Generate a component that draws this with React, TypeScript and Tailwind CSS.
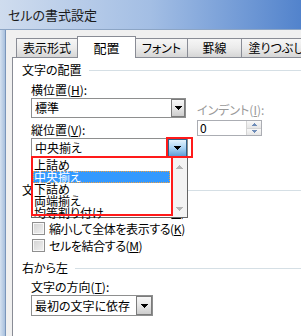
import React from "react";

const Tri = ({ c = "#000", up = false, small = false }: { c?: string; up?: boolean; small?: boolean }) =>
  small ? (
    <svg width="5" height="3" viewBox="0 0 5 3" shapeRendering="crispEdges" className={up ? "rotate-180" : ""}>
      <rect x="0" y="0" width="5" height="1" fill={c} />
      <rect x="1" y="1" width="3" height="1" fill={c} />
      <rect x="2" y="2" width="1" height="1" fill={c} />
    </svg>
  ) : (
    <svg width="7" height="4" viewBox="0 0 7 4" shapeRendering="crispEdges" className={up ? "rotate-180" : ""}>
      <rect x="0" y="0" width="7" height="1" fill={c} />
      <rect x="1" y="1" width="5" height="1" fill={c} />
      <rect x="2" y="2" width="3" height="1" fill={c} />
      <rect x="3" y="3" width="1" height="1" fill={c} />
    </svg>
  );

const Tab = ({ w, children }: { w: string; children: React.ReactNode }) => (
  <div
    className={`-ml-px flex h-[19px] items-center justify-center border border-b-0 border-[#898c95] bg-gradient-to-b from-[#f6f6f6] via-[#ebebeb] to-[#d6d6d6] ${w}`}
  >
    {children}
  </div>
);

const Heading = ({ text, className }: { text: string; className: string }) => (
  <div className={`flex h-[14px] items-center ${className}`}>
    <span className="leading-[14px]">{text}</span>
    <div className="ml-[7px] h-px flex-1 bg-[#d5dfe5]" />
  </div>
);

const Label = ({ children, className = "" }: { children: React.ReactNode; className?: string }) => (
  <div className={`h-[14px] leading-[14px] ${className}`}>{children}</div>
);

const Select = ({ text, w, h, btn }: { text: string; w: string; h: string; btn: string }) => (
  <div className={`flex items-stretch border border-[#8e8f8f] bg-white ${w} ${h}`}>
    <div className="flex flex-1 items-center pl-[3px]">{text}</div>
    <div
      className={`flex items-center justify-center border border-[#7b7b7b] bg-gradient-to-b from-[#f7f7f7] via-[#e6e6e6] to-[#cdcdcd] ${btn}`}
    >
      <Tri />
    </div>
  </div>
);

const Check = ({ children, tight }: { children: React.ReactNode; tight?: boolean }) => (
  <div className="flex h-[13px] items-center">
    <div className="h-[13px] w-[13px] shrink-0 border border-[#8f8f8f] bg-gradient-to-br from-[#d2d2d2] to-[#f2f2f2] shadow-[inset_0_0_0_1px_#f8f8f8]" />
    <span className={tight ? "ml-[4px] whitespace-nowrap leading-[13px] tracking-[-1.3px]" : "ml-[4px] whitespace-nowrap leading-[13px] tracking-[-0.4px]"}>
      {children}
    </span>
  </div>
);

const items = ["上詰め", "中央揃え", "下詰め", "両端揃え", "均等割り付け"];

export default function App() {
  return (
    <div className="flex h-[336px] w-[301px] flex-col overflow-hidden bg-[#f0f0f0] font-['Noto_Sans_CJK_JP',sans-serif] text-[12px] leading-none text-black [font-feature-settings:'palt']">
      <div className="flex h-[30px] shrink-0 items-center border-b border-[#8ca5c5] bg-gradient-to-r from-[#cfdcee] via-[#a3bee4] to-[#5283cc] pl-[8px] text-[13px] text-[#1a1a1a]">
        セルの書式設定
      </div>
      <div className="flex flex-1">
        <div className="w-[6px] shrink-0 border-r border-[#7a96bb] bg-gradient-to-r from-[#d4e1f0] to-[#a8c0dd]" />
        <div className="flex flex-1 flex-col pl-[6px] pt-[6px]">
          <div className="flex h-[21px] items-end pl-[5px]">
            <Tab w="w-[62px]">表示形式</Tab>
            <div className="relative z-10 -mb-px -ml-px flex h-[22px] w-[59px] items-center justify-center border border-b-0 border-[#898c95] bg-white text-[13px]">
              配置
            </div>
            <Tab w="w-[53px]">フォント</Tab>
            <Tab w="w-[55px]">罫線</Tab>
            <Tab w="w-[70px]">塗りつぶし</Tab>
          </div>

          <div className="relative flex flex-1 flex-col border-l border-t border-[#898c95] bg-white pl-[9px]">
            <Heading text="文字の配置" className="mt-[5px]" />
            <div className="ml-[9px] mt-[6px] flex">
              <div className="flex w-[157px] flex-col">
                <Label>
                  横位置(<u>H</u>):
                </Label>
                <div className="mt-[1px]">
                  <Select text="標準" w="w-[155px]" h="h-[20px]" btn="w-[14px]" />
                </div>
                <Label className="mt-[5px]">
                  縦位置(<u>V</u>):
                </Label>
                <div className="mt-[1px] flex h-[20px] w-[157px] items-stretch border border-[#8e8f8f] bg-white">
                  <div className="flex flex-1 items-center pl-[3px]">中央揃え</div>
                  <div className="flex w-[19px] items-center justify-center border border-[#2c628b] bg-gradient-to-b from-[#e4f3fc] via-[#a9d3f3] to-[#5c9fd8]">
                    <Tri />
                  </div>
                </div>
              </div>
              <div className="ml-[9px] flex flex-col">
                <Label className="mt-[20px] text-[#9a9a9a]">
                  インデント(<u>I</u>):
                </Label>
                <div className="mt-[3px] flex h-[16px] w-[65px] border border-[#abadb3] bg-white">
                  <div className="flex flex-1 items-center pl-[2px]">0</div>
                  <div className="flex w-[15px] flex-col border-l border-[#d5d5d5]">
                    <div className="flex flex-1 items-center justify-center border-b border-[#d5d5d5] bg-gradient-to-b from-[#f8f8f8] to-[#e6e6e6]">
                      <Tri small up c="#6f8db8" />
                    </div>
                    <div className="flex flex-1 items-center justify-center bg-gradient-to-b from-[#f8f8f8] to-[#e6e6e6]">
                      <Tri small c="#6f8db8" />
                    </div>
                  </div>
                </div>
              </div>
            </div>

            <Heading text="文字の制御" className="mt-[25px]" />
            <div className="ml-[10px] mt-[8px] flex flex-col gap-[4px]">
              <Check tight>
                折り返して全体を表示する(<u>W</u>)
              </Check>
              <Check>
                縮小して全体を表示する(<u>K</u>)
              </Check>
              <Check>
                セルを結合する(<u>M</u>)
              </Check>
            </div>

            <Heading text="右から左" className="mt-[9px]" />
            <Label className="ml-[9px] mt-[5px]">
              文字の方向(<u>T</u>):
            </Label>
            <div className="ml-[9px] mt-[1px]">
              <Select text="最初の文字に依存" w="w-[122px]" h="h-[21px]" btn="w-[16px]" />
            </div>

            {/* open dropdown list */}
            <div className="absolute left-[18px] top-[99px] z-20 flex h-[61px] w-[157px] border border-[#646464] bg-white">
              <div className="flex flex-1 flex-col pt-[1px]">
                {items.map((t, i) => (
                  <div
                    key={t}
                    className={
                      i === 1
                        ? "mx-[1px] flex h-[12px] items-center border border-dotted border-[#f0a040] bg-[#3399ff] text-white"
                        : "mx-[1px] flex h-[12px] items-center pl-px"
                    }
                  >
                    {t}
                  </div>
                ))}
              </div>
              <div className="flex w-[16px] flex-col bg-[#f3f3f3]">
                <div className="flex h-[17px] items-center justify-center">
                  <Tri up c="#b4b4b4" />
                </div>
                <div className="flex-1" />
                <div className="flex h-[17px] items-center justify-center">
                  <Tri c="#b4b4b4" />
                </div>
              </div>
            </div>

            {/* red highlight marks */}
            <div className="absolute left-[18px] top-[98px] z-30 h-[60px] w-[142px] border-2 border-[#ff1a1a]" />
            <div className="absolute left-[153px] top-[79px] z-30 h-[21px] w-[27px] border-2 border-[#ff1a1a]" />
          </div>
        </div>
      </div>
    </div>
  );
}
